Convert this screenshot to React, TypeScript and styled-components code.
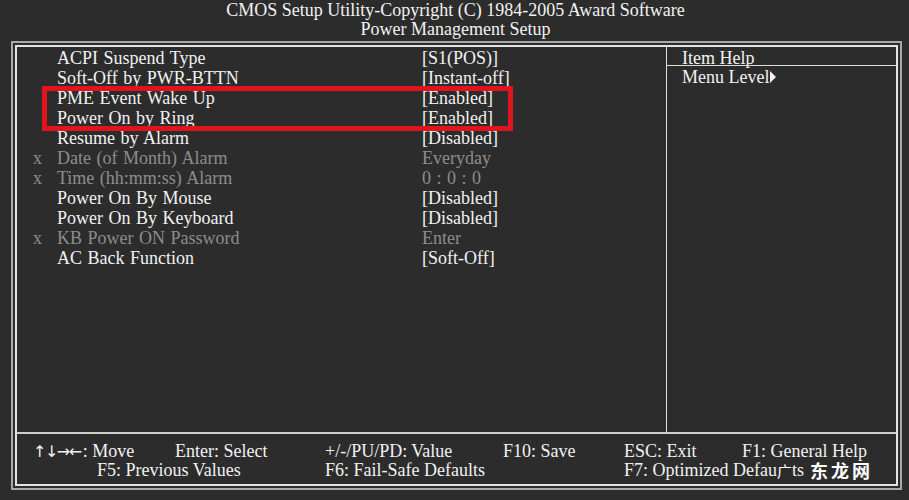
import React from "react";
import styled, { createGlobalStyle } from "styled-components";

const Global = createGlobalStyle`
  html, body { margin: 0; padding: 0; background: #2c2c2c; }
  body { font-family: "Liberation Serif", "Times New Roman", serif; color: #f2f2f2; }
`;

const Page = styled.div`
  width: 909px;
  height: 500px;
  background: #2c2c2c;
  overflow: hidden;
`;

const Header = styled.header`
  padding-top: 1px;
  text-align: center;
  font-size: 18px;
  line-height: 19px;
  color: #f2f2f2;
  margin-left: 2px;
`;

const Frame = styled.div`
  margin: 2px 0 0 11px;
  width: 891px;
  height: 449px;
  box-sizing: border-box;
  border: 2px solid #a9a9a9;
  padding: 2px;
`;

const Inner = styled.div`
  height: 100%;
  box-sizing: border-box;
  border: 2px solid #e4e4e4;
  display: grid;
  grid-template-rows: 385px 1fr;
`;

const Main = styled.div`
  display: grid;
  grid-template-columns: 649px 1fr;
`;

const List = styled.div`
  position: relative;
  padding-top: 1px;
`;

const Row = styled.div<{ $disabled?: boolean }>`
  display: grid;
  grid-template-columns: 24px 365px 1fr;
  padding-left: 16px;
  height: 20px;
  line-height: 20px;
  font-size: 18px;
  word-spacing: 1px;
  white-space: nowrap;
  color: ${(p) => (p.$disabled ? "#8c8c8c" : "#f2f2f2")};
`;

const Highlight = styled.div`
  position: absolute;
  left: 25px;
  top: 39px;
  width: 471px;
  height: 45px;
  box-sizing: border-box;
  border: 5px solid #e0141c;
  pointer-events: none;
`;

const Help = styled.div`
  border-left: 1px solid #dcdcdc;
  display: flex;
  flex-direction: column;
`;

const HelpTitle = styled.div`
  height: 18px;
  line-height: 22px;
  padding-left: 15px;
  font-size: 18px;
  border-bottom: 1px solid #dcdcdc;
`;

const HelpText = styled.div`
  padding: 1px 0 0 15px;
  font-size: 18px;
  line-height: 20px;
  display: flex;
  align-items: center;
`;

const Arrow = styled.span`
  display: inline-block;
  width: 0;
  height: 0;
  margin-left: 1px;
  border-top: 6px solid transparent;
  border-bottom: 6px solid transparent;
  border-left: 6px solid #f2f2f2;
`;

const Footer = styled.footer`
  border-top: 2px solid #cfcfcf;
  display: grid;
  grid-template-columns: 142px 150px 178px 121px 118px 1fr;
  grid-auto-rows: 19px;
  padding: 8px 0 0 16px;
  font-size: 18px;
  line-height: 19px;
  white-space: nowrap;
`;

const Key = styled.span<{ $col: number; $span?: number; $row: number; $indent?: number }>`
  grid-column: ${(p) => p.$col} / span ${(p) => p.$span ?? 1};
  grid-row: ${(p) => p.$row};
  padding-left: ${(p) => p.$indent ?? 0}px;
  height: 19px;
`;

const Arrows = styled.span`
  font-family: "DejaVu Sans", sans-serif;
  font-size: 16px;
  letter-spacing: -1.5px;
  line-height: 19px;
  vertical-align: top;
  margin-right: 2px;
`;

const Mark = styled.span`
  display: inline-block;
  height: 19px;
  font-family: "Noto Sans CJK SC", sans-serif;
  font-size: 15px;
  line-height: 19px;
  vertical-align: top;
  color: #ffffff;
`;

const Brand = styled.span`
  display: inline-block;
  height: 19px;
  font-family: "Noto Sans CJK SC", sans-serif;
  font-size: 18px;
  line-height: 19px;
  vertical-align: top;
  font-weight: 700;
  color: #ffffff;
  margin-left: 6px;
  letter-spacing: 3px;
`;

type Item = { label: string; value: string; disabled?: boolean };

const items: Item[] = [
  { label: "ACPI Suspend Type", value: "[S1(POS)]" },
  { label: "Soft-Off by PWR-BTTN", value: "[Instant-off]" },
  { label: "PME Event Wake Up", value: "[Enabled]" },
  { label: "Power On by Ring", value: "[Enabled]" },
  { label: "Resume by Alarm", value: "[Disabled]" },
  { label: "Date (of Month) Alarm", value: "Everyday", disabled: true },
  { label: "Time (hh:mm:ss) Alarm", value: "0 : 0 : 0", disabled: true },
  { label: "Power On By Mouse", value: "[Disabled]" },
  { label: "Power On By Keyboard", value: "[Disabled]" },
  { label: "KB Power ON Password", value: "Enter", disabled: true },
  { label: "AC Back Function", value: "[Soft-Off]" },
];

export default function App() {
  return (
    <Page>
      <Global />
      <Header>
        <div>CMOS Setup Utility-Copyright (C) 1984-2005 Award Software</div>
        <div>Power Management Setup</div>
      </Header>
      <Frame>
        <Inner>
          <Main>
            <List>
              {items.map((it) => (
                <Row key={it.label} $disabled={it.disabled}>
                  <span>{it.disabled ? "x" : ""}</span>
                  <span>{it.label}</span>
                  <span>{it.value}</span>
                </Row>
              ))}
              <Highlight />
            </List>
            <Help>
              <HelpTitle>Item Help</HelpTitle>
              <HelpText>
                Menu Level<Arrow />
              </HelpText>
            </Help>
          </Main>
          <Footer>
            <Key $col={1} $row={1}><Arrows>↑↓→←</Arrows>: Move</Key>
            <Key $col={2} $row={1}>Enter: Select</Key>
            <Key $col={3} $row={1}>+/-/PU/PD: Value</Key>
            <Key $col={4} $row={1}>F10: Save</Key>
            <Key $col={5} $row={1}>ESC: Exit</Key>
            <Key $col={6} $row={1}>F1: General Help</Key>
            <Key $col={1} $span={2} $row={2} $indent={64}>F5: Previous Values</Key>
            <Key $col={3} $span={2} $row={2}>F6: Fail-Safe Defaults</Key>
            <Key $col={5} $span={2} $row={2}>
              F7: Optimized Defau<Mark>广</Mark>ts<Brand>东龙网</Brand>
            </Key>
          </Footer>
        </Inner>
      </Frame>
    </Page>
  );
}
